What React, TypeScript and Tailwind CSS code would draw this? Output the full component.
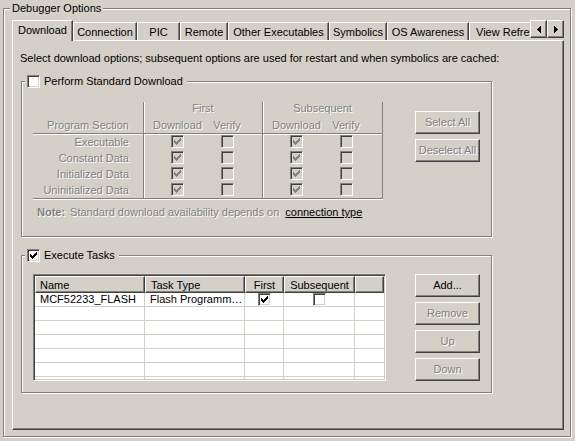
import React from 'react';

const tabs = [
  { label: 'Connection', w: 'w-[64px]' },
  { label: 'PIC', w: 'w-[43px]' },
  { label: 'Remote', w: 'w-[48px]' },
  { label: 'Other Executables', w: 'w-[101px]' },
  { label: 'Symbolics', w: 'w-[58px]' },
  { label: 'OS Awareness', w: 'w-[82px]' },
];

const sections = ['Executable', 'Constant Data', 'Initialized Data', 'Uninitialized Data'];

function Check({ checked, disabled }: { checked?: boolean; disabled?: boolean }) {
  return (
    <span
      className={`flex h-[13px] w-[13px] shrink-0 border border-t-[#808080] border-l-[#808080] border-r-white border-b-white shadow-[inset_1px_1px_0_#404040,inset_-1px_-1px_0_#d4d0c8] ${
        disabled ? 'bg-[#d4d0c8]' : 'bg-white'
      }`}
    >
      {checked && (
        <svg width="11" height="11" viewBox="0 0 11 11" shapeRendering="crispEdges" className="block">
          <path
            d="M8 2h1v1h-1z M7 3h2v1h-2z M2 4h1v1h-1z M6 4h3v1h-3z M2 5h2v1h-2z M5 5h3v1h-3z M2 6h5v1h-5z M3 7h3v1h-3z M4 8h1v1h-1z"
            fill={disabled ? '#808080' : '#000'}
          />
        </svg>
      )}
    </span>
  );
}

function Btn({ children, disabled }: { children: React.ReactNode; disabled?: boolean }) {
  return (
    <div
      className={`flex h-[23px] w-[65px] items-center justify-center border border-t-white border-l-white border-r-[#404040] border-b-[#404040] shadow-[inset_-1px_-1px_0_#808080] ${
        disabled ? 'text-[#808080] [text-shadow:1px_1px_0_#fff]' : 'text-black'
      }`}
    >
      {children}
    </div>
  );
}

function Group({ label, checked, className, children }: { label: string; checked?: boolean; className: string; children: React.ReactNode }) {
  return (
    <div className={`relative w-[471px] border border-[#808080] shadow-[inset_1px_1px_0_#fff,1px_1px_0_#fff] ${className}`}>
      <div className="absolute -top-[7px] left-[3px] flex items-center gap-[4px] bg-[#d4d0c8] pl-[2px] pr-[4px]">
        <Check checked={checked} />
        <span className="whitespace-nowrap">{label}</span>
      </div>
      {children}
    </div>
  );
}

function DownloadCols({ title, last }: { title: string; last?: boolean }) {
  return (
    <div
      className={`border-l border-[#808080] shadow-[inset_1px_0_0_#fff] ${
        last ? 'w-[121px] border-r' : 'w-[119px]'
      }`}
    >
      <div className="h-[32px] border-b border-[#808080]">
        <div className="h-[17px] text-center">{title}</div>
        <div className="flex h-[14px] pl-[9px]">
          <span className="w-[48px] text-center">Download</span>
          <span className="ml-[10px] w-[32px] text-center">Verify</span>
        </div>
      </div>
      <div className="border-t border-white">
        {sections.map((s, i) => (
          <div key={s} className={`flex pl-[9px] ${i === 3 ? 'h-[15px]' : 'h-[16px]'}`}>
            <span className="flex w-[48px] justify-center">
              <Check checked disabled />
            </span>
            <span className="ml-[10px] flex w-[32px] justify-center">
              <Check disabled />
            </span>
          </div>
        ))}
      </div>
    </div>
  );
}

export default function App() {
  return (
    <div className="h-[441px] w-[575px] overflow-hidden bg-[#d4d0c8] pl-[3px] pt-[8px] font-[family-name:'Liberation_Sans',Arial,sans-serif] text-[11px] leading-[13px] text-black">
      {/* Debugger Options group */}
      <div className="relative h-[429px] w-[568px] border border-[#808080] pl-[8px] pt-[11px] shadow-[inset_1px_1px_0_#fff,1px_1px_0_#fff]">
        <span className="absolute -top-[7px] left-[6px] bg-[#d4d0c8] px-[2px]">Debugger Options</span>

        <div className="w-[552px]">
          {/* tab strip */}
          <div className="flex h-[20px]">
            <div className="flex w-[518px] items-end">
              <div className="relative z-10 -mb-px h-[21px] w-[61px] border-l border-t border-r border-white border-r-[#404040] bg-[#d4d0c8] pt-[3px] text-center shadow-[inset_-1px_0_0_#808080]">
                Download
              </div>
              {tabs.map((t) => (
                <div
                  key={t.label}
                  className={`h-[18px] ${t.w} whitespace-nowrap border-l border-t border-r border-white border-r-[#404040] pt-[3px] text-center shadow-[inset_-1px_0_0_#808080]`}
                >
                  {t.label}
                </div>
              ))}
              <div className="h-[18px] w-[61px] overflow-hidden whitespace-nowrap border-l border-t border-white pl-[6px] pt-[3px]">
                View Refresh
              </div>
            </div>
            <div className="flex items-start">
              <div className="flex h-[18px] w-[17px] items-center justify-center border border-t-white border-l-white border-r-[#404040] border-b-[#404040] shadow-[inset_-1px_-1px_0_#808080]">
                <svg width="4" height="7" viewBox="0 0 4 7" shapeRendering="crispEdges">
                  <path d="M3 0h1v7h-1z M2 1h1v5h-1z M1 2h1v3h-1z M0 3h1v1h-1z" fill="#000" />
                </svg>
              </div>
              <div className="flex h-[18px] w-[17px] items-center justify-center border border-t-white border-l-white border-r-[#404040] border-b-[#404040] shadow-[inset_-1px_-1px_0_#808080]">
                <svg width="4" height="7" viewBox="0 0 4 7" shapeRendering="crispEdges">
                  <path d="M0 0h1v7h-1z M1 1h1v5h-1z M2 2h1v3h-1z M3 3h1v1h-1z" fill="#000" />
                </svg>
              </div>
            </div>
          </div>

          {/* tab page */}
          <div className="h-[390px] border border-t-white border-l-white border-r-[#404040] border-b-[#404040] pl-[8px] pt-[11px] shadow-[inset_-1px_-1px_0_#808080]">
            <p className="-ml-px whitespace-nowrap">
              Select download options; subsequent options are used for restart and when symbolics are cached:
            </p>

            <Group label="Perform Standard Download" className="mt-[16px] flex h-[156px] pl-[11px] pt-[20px]">
              <div className="w-[350px] text-[#808080] [text-shadow:1px_1px_0_#fff]">
                <div className="flex border-b border-[#808080] shadow-[0_1px_0_#fff]">
                  <div className="w-[110px]">
                    <div className="h-[32px] border-b border-[#808080] pr-[14px] pt-[17px] text-right">Program Section</div>
                    <div className="border-t border-white">
                      {sections.map((s, i) => (
                        <div key={s} className={`pr-[14px] pt-px text-right ${i === 3 ? 'h-[15px]' : 'h-[16px]'}`}>
                          {s}
                        </div>
                      ))}
                    </div>
                  </div>
                  <DownloadCols title="First" />
                  <DownloadCols title="Subsequent" last />
                </div>
                <div className="mt-[7px] flex whitespace-nowrap pl-[4px]">
                  <span className="font-bold">Note:</span>
                  <span className="ml-[5px]">Standard download availability depends on</span>
                  <span className="ml-[6px] text-black underline [text-shadow:none]">connection type</span>
                </div>
              </div>
              <div className="ml-[32px] mt-[9px] flex flex-col gap-[5px]">
                <Btn disabled>Select All</Btn>
                <Btn disabled>Deselect All</Btn>
              </div>
            </Group>

            <Group label="Execute Tasks" checked className="mt-[18px] flex h-[138px] pl-[11px] pt-[18px]">
              <div className="h-[107px] w-[353px] border border-t-[#808080] border-l-[#808080] border-r-white border-b-white p-px shadow-[inset_1px_1px_0_#404040,inset_-1px_-1px_0_#d4d0c8]">
                <div className="flex">
                  <div className="h-[17px] w-[110px] border border-t-white border-l-white border-r-[#404040] border-b-[#404040] pl-[4px] pt-[2px] shadow-[inset_-1px_-1px_0_#808080]">Name</div>
                  <div className="h-[17px] w-[100px] border border-t-white border-l-white border-r-[#404040] border-b-[#404040] pl-[5px] pt-[2px] shadow-[inset_-1px_-1px_0_#808080]">Task Type</div>
                  <div className="h-[17px] w-[39px] border border-t-white border-l-white border-r-[#404040] border-b-[#404040] pt-[2px] text-center shadow-[inset_-1px_-1px_0_#808080]">First</div>
                  <div className="h-[17px] w-[71px] border border-t-white border-l-white border-r-[#404040] border-b-[#404040] pt-[2px] text-center shadow-[inset_-1px_-1px_0_#808080]">Subsequent</div>
                  <div className="h-[17px] w-[29px] border border-t-white border-l-white border-r-[#404040] border-b-[#404040] shadow-[inset_-1px_-1px_0_#808080]" />
                </div>
                <div className="h-[86px] overflow-hidden bg-white">
                  {[0, 1, 2, 3, 4, 5, 6].map((r) => (
                    <div key={r} className="flex h-[14px]">
                      <div className="w-[110px] whitespace-nowrap border-b border-r border-[#d4d0c8] pl-[5px]">{r === 0 ? 'MCF52233_FLASH' : ''}</div>
                      <div className="w-[100px] whitespace-nowrap border-b border-r border-[#d4d0c8] pl-[5px]">{r === 0 ? 'Flash Programm…' : ''}</div>
                      <div className="flex w-[39px] justify-center border-b border-r border-[#d4d0c8]">{r === 0 && <Check checked />}</div>
                      <div className="flex w-[71px] justify-center border-b border-r border-[#d4d0c8]">{r === 0 && <Check />}</div>
                      <div className="w-[29px] border-b border-[#d4d0c8]" />
                    </div>
                  ))}
                </div>
              </div>
              <div className="ml-[29px] flex flex-col gap-[5px]">
                <Btn>Add...</Btn>
                <Btn disabled>Remove</Btn>
                <Btn disabled>Up</Btn>
                <Btn disabled>Down</Btn>
              </div>
            </Group>
          </div>
        </div>
      </div>
    </div>
  );
}
